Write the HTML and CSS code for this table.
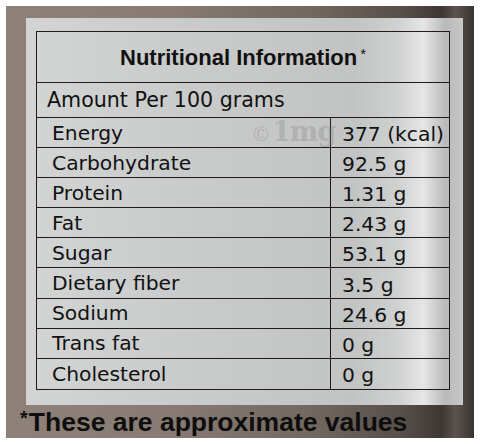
FILE: index.html
```html
<!DOCTYPE html>
<html>
<head>
<meta charset="utf-8">
<link rel="stylesheet" href="styles.css">
</head>
<body>
<div class="photo">
  <div class="panel">
    <div class="table">
      <div class="title">Nutritional Information<span class="star">*</span></div>
      <div class="amount">Amount Per 100 grams</div>
      <div class="grid">
        <div class="row"><span class="name">Energy</span><span class="val">377 (kcal)</span><span class="mark"><span class="copy">©</span>1mg</span></div>
        <div class="row"><span class="name">Carbohydrate</span><span class="val">92.5 g</span></div>
        <div class="row"><span class="name">Protein</span><span class="val">1.31 g</span></div>
        <div class="row"><span class="name">Fat</span><span class="val">2.43 g</span></div>
        <div class="row"><span class="name">Sugar</span><span class="val">53.1 g</span></div>
        <div class="row"><span class="name">Dietary fiber</span><span class="val">3.5 g</span></div>
        <div class="row"><span class="name">Sodium</span><span class="val">24.6 g</span></div>
        <div class="row"><span class="name">Trans fat</span><span class="val">0 g</span></div>
        <div class="row last"><span class="name">Cholesterol</span><span class="val">0 g</span></div>
      </div>
    </div>
  </div>
  <div class="note"><span class="nstar">*</span>These are approximate values</div>
</div>
</body>
</html>
```
FILE: styles.css
```css
html, body {
  margin: 0;
  padding: 0;
  background: #ffffff;
}
body {
  width: 480px;
  height: 444px;
  overflow: hidden;
  font-family: "DejaVu Sans", sans-serif;
  color: #111;
}
.photo {
  margin: 6px 6px 0 6px;
  width: 468px;
  height: 432px;
  overflow: hidden;
  background: linear-gradient(90deg, #8d8179 0%, #877b74 35%, #72685f 65%, #564e4a 85%, #3d3734 93%, #5a5350 96%, #3a3431 100%);
  display: flex;
  flex-direction: column;
}
.panel {
  margin: 12px 0 0 20px;
  width: 437px;
  height: 387px;
  box-sizing: border-box;
  padding: 13px 0 0 10px;
  background: linear-gradient(90deg, #d3d4d4 0%, #cbcccc 30%, #c6c7c7 55%, #c2c3c3 75%, #cfd0d0 85%, #e6e6e6 91%, #b9b9b9 96%, #c8c8c8 100%);
}
.table {
  width: 414px;
  border: 1.5px solid #1c1c1c;
  box-sizing: border-box;
}
.title {
  height: 51px;
  display: flex;
  align-items: center;
  justify-content: center;
  font-family: "Liberation Sans", Arial, sans-serif;
  font-weight: bold;
  font-size: 22px;
  border-bottom: 1.5px solid #1c1c1c;
  padding-top: 2px;
  box-sizing: border-box;
}
.star {
  font-size: 15px;
  align-self: flex-start;
  margin-top: 11px;
  margin-left: 3px;
  font-weight: normal;
}
.amount {
  height: 35px;
  box-sizing: border-box;
  padding-left: 10px;
  display: flex;
  align-items: center;
  font-size: 20.6px;
  border-bottom: 1.5px solid #1c1c1c;
}
.row {
  position: relative;
  height: 30.1px;
  display: grid;
  grid-template-columns: 294px 1fr;
  border-bottom: 1.5px solid #1c1c1c;
  box-sizing: border-box;
  font-size: 20.3px;
}
.row.last {
  border-bottom: none;
}
.name {
  padding-left: 15px;
  border-right: 1.5px solid #1c1c1c;
  display: flex;
  align-items: center;
}
.val {
  padding-left: 11px;
  display: flex;
  align-items: center;
  padding-top: 3px;
}
.mark {
  position: absolute;
  left: 214px;
  top: -2px;
  font-family: "DejaVu Serif", serif;
  font-weight: bold;
  font-size: 27px;
  color: rgba(125, 125, 125, 0.3);
  letter-spacing: -1px;
}
.copy {
  font-size: 20px;
  font-weight: normal;
  margin-right: 2px;
}
.note {
  margin: 2px 0 0 14px;
  font-family: "Liberation Sans", Arial, sans-serif;
  font-weight: bold;
  font-size: 26.5px;
  color: #0e0e0e;
  white-space: nowrap;
}
.nstar {
  font-size: 20px;
  vertical-align: 6px;
  margin-right: 1px;
}
```
